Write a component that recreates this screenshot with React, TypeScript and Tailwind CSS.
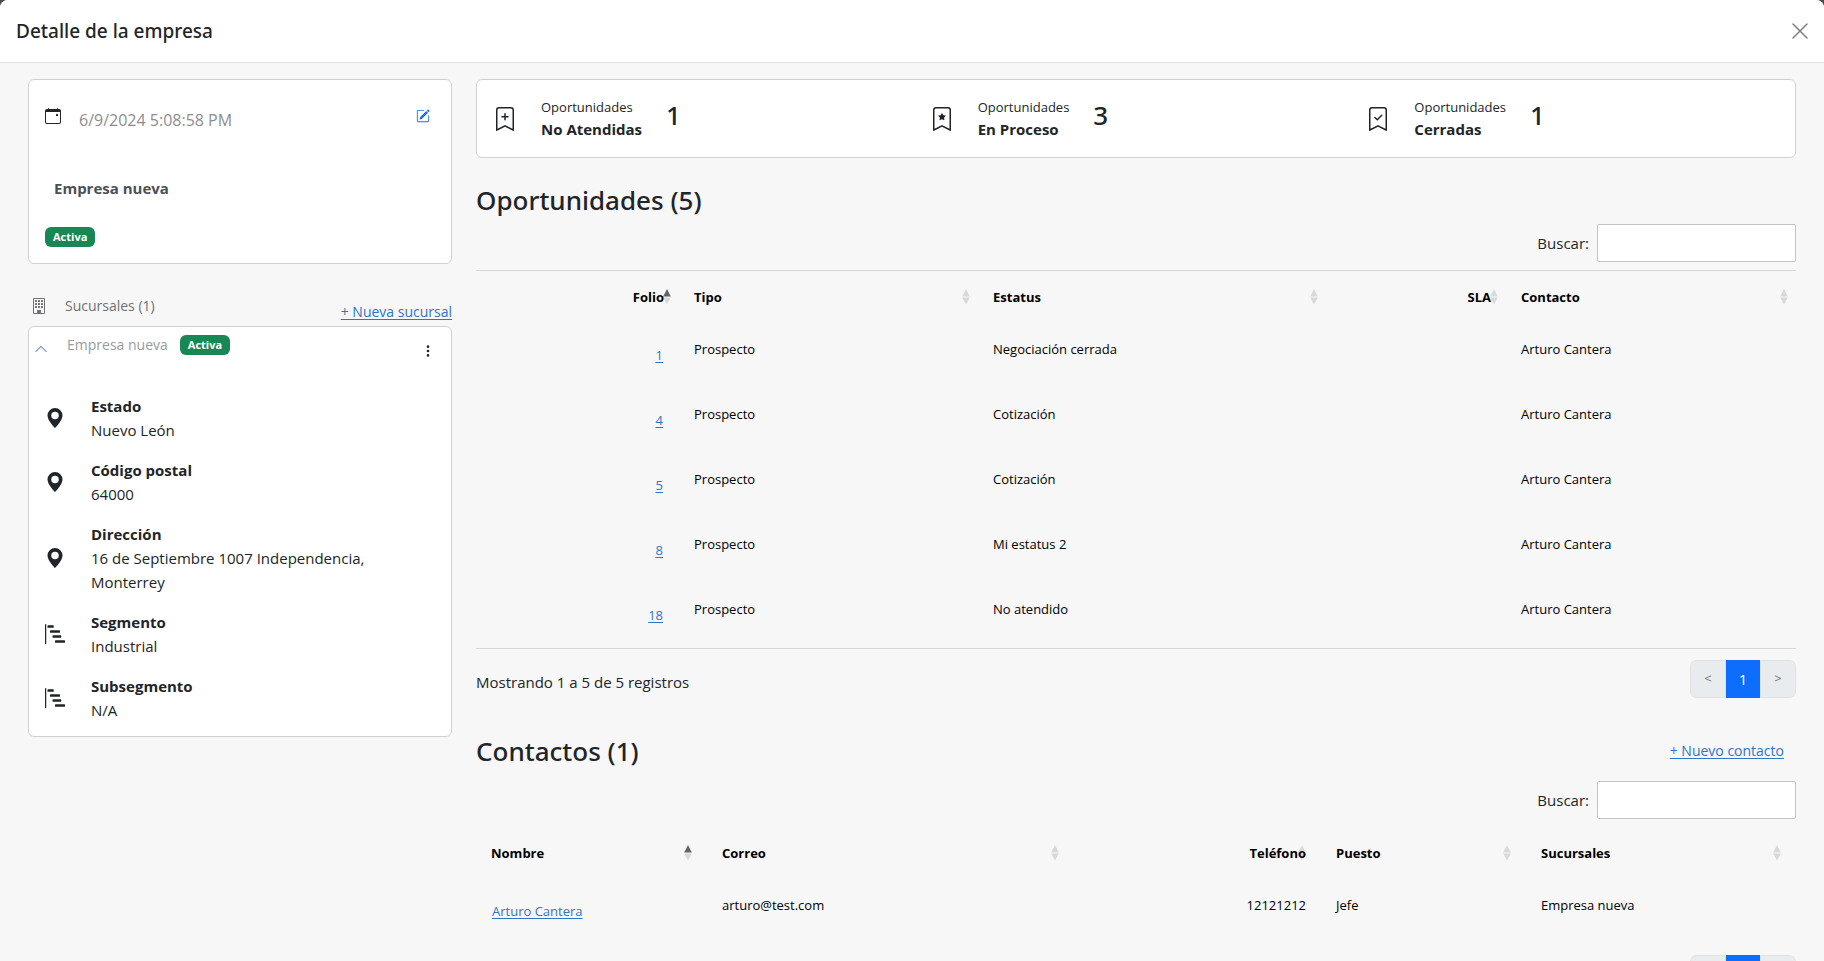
import type { ReactNode } from "react";
import {
  BsBarChartSteps,
  BsBookmarkCheck,
  BsBookmarkPlus,
  BsBookmarkStar,
  BsBuilding,
  BsCalendarEvent,
  BsChevronUp,
  BsGeoAltFill,
  BsPencilSquare,
  BsThreeDotsVertical,
} from "react-icons/bs";

type SortState = "asc" | "none";

interface Column {
  label: string;
  width: string;
  align?: "right";
  sort?: SortState;
}

function SortGlyph({ state }: { state: SortState }) {
  return (
    <svg viewBox="0 0 8 16" className="h-4 w-2" aria-hidden="true">
      <path d="M4 0 7.800 7.500H.2z" fill={state === "asc" ? "#636363" : "#d9d9d9"} />
      <path d="M4 15.500.2 8.500h7.600z" fill="#d9d9d9" />
    </svg>
  );
}

function Badge({ children }: { children: ReactNode }) {
  return (
    <span className="inline-block rounded-md bg-[#198754] px-2 text-[11px] leading-5 font-bold text-white">
      {children}
    </span>
  );
}

function ActionLink({ children }: { children: ReactNode }) {
  return (
    <a href="#" className="block text-sm leading-5 text-[#2f74c9] underline underline-offset-2">
      {children}
    </a>
  );
}

function CellLink({ children }: { children: ReactNode }) {
  return (
    <a href="#" className="inline-block px-px py-[6px] text-[#2f74c9] underline underline-offset-2">
      {children}
    </a>
  );
}

function SectionTitle({ children }: { children: ReactNode }) {
  return <h2 className="font-['Noto_Sans',sans-serif] text-[26px] leading-9 font-medium">{children}</h2>;
}

function DetailItem({ icon, label, value }: { icon: ReactNode; label: string; value: string }) {
  return (
    <li className="flex items-center gap-[26px]">
      <span className="shrink-0 text-xl">{icon}</span>
      <div className="max-w-[290px] leading-6">
        <p className="font-bold">{label}</p>
        <p>{value}</p>
      </div>
    </li>
  );
}

function Stat({ icon, label, count }: { icon: ReactNode; label: string; count: number }) {
  return (
    <div className="flex items-start px-3">
      <span className="mt-[10px] text-2xl">{icon}</span>
      <div className="ml-6">
        <p className="text-[13px] leading-5">Oportunidades</p>
        <p className="text-[15px] leading-6 font-bold">{label}</p>
      </div>
      <p className="ml-6 font-['Noto_Sans',sans-serif] text-[26px] leading-9 font-medium">{count}</p>
    </div>
  );
}

function SearchBox({ id }: { id: string }) {
  return (
    <div className="flex items-center justify-end gap-2">
      <label htmlFor={id}>Buscar:</label>
      <input
        id={id}
        type="search"
        className="h-[38px] w-[199px] rounded-xs border border-[#c4c4c4] bg-white px-2 outline-none"
      />
    </div>
  );
}

function DataTable({
  columns,
  rows,
  glyphClass,
}: {
  columns: Column[];
  rows: ReactNode[][];
  glyphClass: string;
}) {
  return (
    <table className="w-full table-fixed text-[13px] leading-5 text-black">
      <thead>
        <tr>
          {columns.map((c) => (
            <th key={c.label} className={`relative p-0 ${c.width}`}>
              <button
                type="button"
                className={`w-full px-[15px] py-4 font-bold ${c.align === "right" ? "text-right" : "text-left"}`}
              >
                <span className={`absolute top-[18px] ${glyphClass}`}>
                  <SortGlyph state={c.sort ?? "none"} />
                </span>
                <span className="relative">{c.label}</span>
              </button>
            </th>
          ))}
        </tr>
      </thead>
      <tbody>
        {rows.map((row, r) => (
          <tr key={r} className="h-[65px] align-top">
            {row.map((cell, i) => (
              <td
                key={i}
                className={`px-[15px] py-4 ${columns[i].align === "right" ? "text-right" : "text-left"}`}
              >
                {cell}
              </td>
            ))}
          </tr>
        ))}
      </tbody>
    </table>
  );
}

function Pager() {
  return (
    <nav aria-label="Paginación" className="flex h-[38px] overflow-hidden rounded-md text-[15px]">
      <button type="button" disabled className="w-9 rounded-l-md border border-[#dee2e6] bg-[#e9ecef] text-[13px] text-[#6c757d]">
        &lt;
      </button>
      <button type="button" aria-current="page" className="w-[34px] bg-[#0d6efd] text-white">
        1
      </button>
      <button type="button" disabled className="w-9 rounded-r-md border border-[#dee2e6] bg-[#e9ecef] text-[13px] text-[#6c757d]">
        &gt;
      </button>
    </nav>
  );
}

const opportunityColumns: Column[] = [
  { label: "Folio", width: "w-[203px]", align: "right", sort: "asc" },
  { label: "Tipo", width: "w-[299px]" },
  { label: "Estatus", width: "w-[348px]" },
  { label: "SLA", width: "w-[180px]", align: "right" },
  { label: "Contacto", width: "w-[290px]" },
];

const opportunities = [
  { folio: 1, estatus: "Negociación cerrada" },
  { folio: 4, estatus: "Cotización" },
  { folio: 5, estatus: "Cotización" },
  { folio: 8, estatus: "Mi estatus 2" },
  { folio: 18, estatus: "No atendido" },
];

const contactColumns: Column[] = [
  { label: "Nombre", width: "w-[231px]", sort: "asc" },
  { label: "Correo", width: "w-[367px]" },
  { label: "Teléfono", width: "w-[247px]", align: "right" },
  { label: "Puesto", width: "w-[205px]" },
  { label: "Sucursales", width: "w-[270px]" },
];

export default function App() {
  return (
    <div className="h-screen bg-[#4b4b4b] font-['Open_Sans',sans-serif] text-[15px] text-[#212529]">
      <div className="flex h-full flex-col overflow-hidden rounded-t-lg bg-[#f7f7f7]">
        <header className="flex shrink-0 items-center justify-between border-b border-[#dee2e6] bg-white p-4">
          <h1 className="font-['Noto_Sans',sans-serif] text-[19px] leading-[30px] font-medium">
            Detalle de la empresa
          </h1>
          <button type="button" aria-label="Cerrar" className="text-[#7f7f7f]">
            <svg viewBox="0 0 16 16" className="size-4" fill="none" stroke="currentColor" strokeWidth="1.500" strokeLinecap="round">
              <path d="M1 1l14 14M15 1 1 15" />
            </svg>
          </button>
        </header>

        <div className="flex flex-1 items-start overflow-y-auto px-4 pt-4 [scrollbar-width:none]">
          <aside className="w-1/4 px-3">
            <section className="rounded-md border border-[#cfd1d3] bg-white px-4 pb-4">
              <div className="flex items-start pt-7">
                <BsCalendarEvent className="size-4" />
                <p className="ml-[18px] text-base leading-6 text-[#8d8d8d]">6/9/2024 5:08:58 PM</p>
                <button type="button" aria-label="Editar empresa" className="mt-px mr-[5px] ml-auto text-[#1f6fd6]">
                  <BsPencilSquare className="size-[14px]" />
                </button>
              </div>
              <h2 className="mt-11 ml-[9px] leading-6 font-bold text-[#4b5058]">Empresa nueva</h2>
              <div className="mt-6 flex pt-[3px]">
                <Badge>Activa</Badge>
              </div>
            </section>

            <div className="mt-[30px] flex items-start justify-between">
              <h2 className="flex items-center gap-[18px] pl-[3px] text-sm leading-6 text-[#6f7275]">
                <BsBuilding className="size-4" />
                Sucursales (1)
              </h2>
              <div className="mt-2">
                <ActionLink>+ Nueva sucursal</ActionLink>
              </div>
            </div>

            <section className="mt-1 rounded-md border border-[#cfd1d3] bg-white px-4 pb-[14px]">
              <header className="flex items-start pt-[6px]">
                <button type="button" aria-label="Contraer sucursal" className="mt-[9px] -ml-[11px] text-[#6c7fd0]">
                  <BsChevronUp className="size-[14px]" />
                </button>
                <h3 className="ml-[19px] text-sm leading-6 text-[#959ca0]">Empresa nueva</h3>
                <div className="mt-[2px] ml-3 flex">
                  <Badge>Activa</Badge>
                </div>
                <button type="button" aria-label="Opciones" className="mt-[11px] ml-auto">
                  <BsThreeDotsVertical className="size-[14px]" />
                </button>
              </header>
              <ul className="mt-9 flex flex-col gap-4">
                <DetailItem icon={<BsGeoAltFill />} label="Estado" value="Nuevo León" />
                <DetailItem icon={<BsGeoAltFill />} label="Código postal" value="64000" />
                <DetailItem
                  icon={<BsGeoAltFill />}
                  label="Dirección"
                  value="16 de Septiembre 1007 Independencia, Monterrey"
                />
                <DetailItem icon={<BsBarChartSteps />} label="Segmento" value="Industrial" />
                <DetailItem icon={<BsBarChartSteps />} label="Subsegmento" value="N/A" />
              </ul>
            </section>
          </aside>

          <main className="w-3/4 px-3">
            <section className="grid grid-cols-3 rounded-md border border-[#cfd1d3] bg-white px-1 pt-[17px] pb-4">
              <Stat icon={<BsBookmarkPlus />} label="No Atendidas" count={1} />
              <Stat icon={<BsBookmarkStar />} label="En Proceso" count={3} />
              <Stat icon={<BsBookmarkCheck />} label="Cerradas" count={1} />
            </section>

            <section className="pt-6">
              <SectionTitle>Oportunidades (5)</SectionTitle>
              <div className="mt-[6px]">
                <SearchBox id="buscar-oportunidades" />
              </div>
              <div className="mt-2 border-y border-[#d5d7d9]">
                <DataTable
                  columns={opportunityColumns}
                  glyphClass="right-2"
                  rows={opportunities.map((o) => [
                    <CellLink>{o.folio}</CellLink>,
                    "Prospecto",
                    o.estatus,
                    "",
                    "Arturo Cantera",
                  ])}
                />
              </div>
              <div className="mt-[11px] flex items-start justify-between">
                <p className="mt-[10px] leading-6">Mostrando 1 a 5 de 5 registros</p>
                <Pager />
              </div>
            </section>

            <section className="pt-[35px]">
              <div className="flex items-center justify-between">
                <SectionTitle>Contactos (1)</SectionTitle>
                <div className="mr-3">
                  <ActionLink>+ Nuevo contacto</ActionLink>
                </div>
              </div>
              <div className="mt-3">
                <SearchBox id="buscar-contactos" />
              </div>
              <div className="mt-2">
                <DataTable
                  columns={contactColumns}
                  glyphClass="right-[15px]"
                  rows={[
                    [
                      <CellLink>Arturo Cantera</CellLink>,
                      "arturo@test.com",
                      "12121212",
                      "Jefe",
                      "Empresa nueva",
                    ],
                  ]}
                />
              </div>
              <div className="mt-[11px] flex justify-end">
                <Pager />
              </div>
            </section>
          </main>
        </div>
      </div>
    </div>
  );
}
